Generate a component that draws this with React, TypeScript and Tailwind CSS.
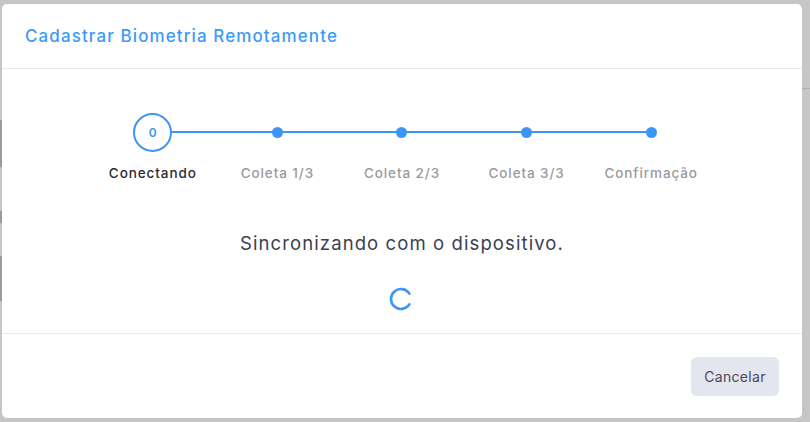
import React from "react";

const steps = ["Conectando", "Coleta 1/3", "Coleta 2/3", "Coleta 3/3", "Confirmação"];

export default function App() {
  return (
    <div
      className="relative w-[810px] h-[422px] bg-[#c6c6c6] overflow-hidden"
      style={{ fontFamily: "Inter, 'Noto Sans', sans-serif" }}
    >
      <div className="absolute left-0 top-[120px] w-[2px] h-[47px] bg-[#9a9a9a]" />
      <div className="absolute left-0 top-[211px] w-[2px] h-[12px] bg-[#9a9a9a]" />
      <div className="absolute left-0 top-[256px] w-[2px] h-[45px] bg-[#9a9a9a]" />
      <div className="absolute right-0 top-[88px] w-[8px] h-[1px] bg-[#b0b0b0]" />
      <div className="absolute left-[2px] top-[4px] w-[800px] h-[414px] bg-white rounded-[5px] flex flex-col">
        <div className="h-[65px] border-b border-[#e8e8ee] flex items-center pl-[23px] pt-[2px]">
          <span className="text-[17px] font-medium text-[#3d9bf5] tracking-[1.1px]">
            Cadastrar Biometria Remotamente
          </span>
        </div>
        <div className="h-[265px] border-b border-[#e8e8ee] flex flex-col items-center">
          <div className="relative w-[623px] mt-[44px]">
            <div className="absolute left-[62px] right-[62px] top-[18px] h-[2px] bg-[#3d96f5]" />
            <div className="relative grid grid-cols-5">
              {steps.map((s, i) => (
                <div key={s} className="flex flex-col items-center">
                  <div className="h-[39px] flex items-center justify-center">
                    {i === 0 ? (
                      <div className="w-[39px] h-[39px] rounded-full border-2 border-[#3d96f5] bg-white flex items-center justify-center text-[12px] font-semibold text-[#3d96f5]">
                        0
                      </div>
                    ) : (
                      <div className="w-[11px] h-[11px] rounded-full bg-[#3d96f5]" />
                    )}
                  </div>
                  <span
                    className={
                      "mt-[11px] text-[13.5px] font-medium tracking-[0.9px] " +
                      (i === 0 ? "text-[#2b2b33]" : "text-[#9a9a9e]")
                    }
                  >
                    {s}
                  </span>
                </div>
              ))}
            </div>
          </div>
          <div className="mt-[47px] text-[18.5px] text-[#3a3f51] tracking-[1.1px]">
            Sincronizando com o dispositivo.
          </div>
          <svg className="mt-[28px]" width="26" height="26" viewBox="0 0 26 26">
            <path
              d="M20.4 7.6 A10 10 0 1 0 20.4 18.4"
              fill="none"
              stroke="#3d96f5"
              strokeWidth="2.6"
              strokeLinecap="round"
            />
          </svg>
        </div>
        <div className="flex-1 flex items-center justify-end pr-[23px]">
          <button className="w-[88px] h-[39px] rounded-[6px] bg-[#e3e5ef] text-[14px] text-[#4a4a58] tracking-[0.3px]">
            Cancelar
          </button>
        </div>
      </div>
    </div>
  );
}
